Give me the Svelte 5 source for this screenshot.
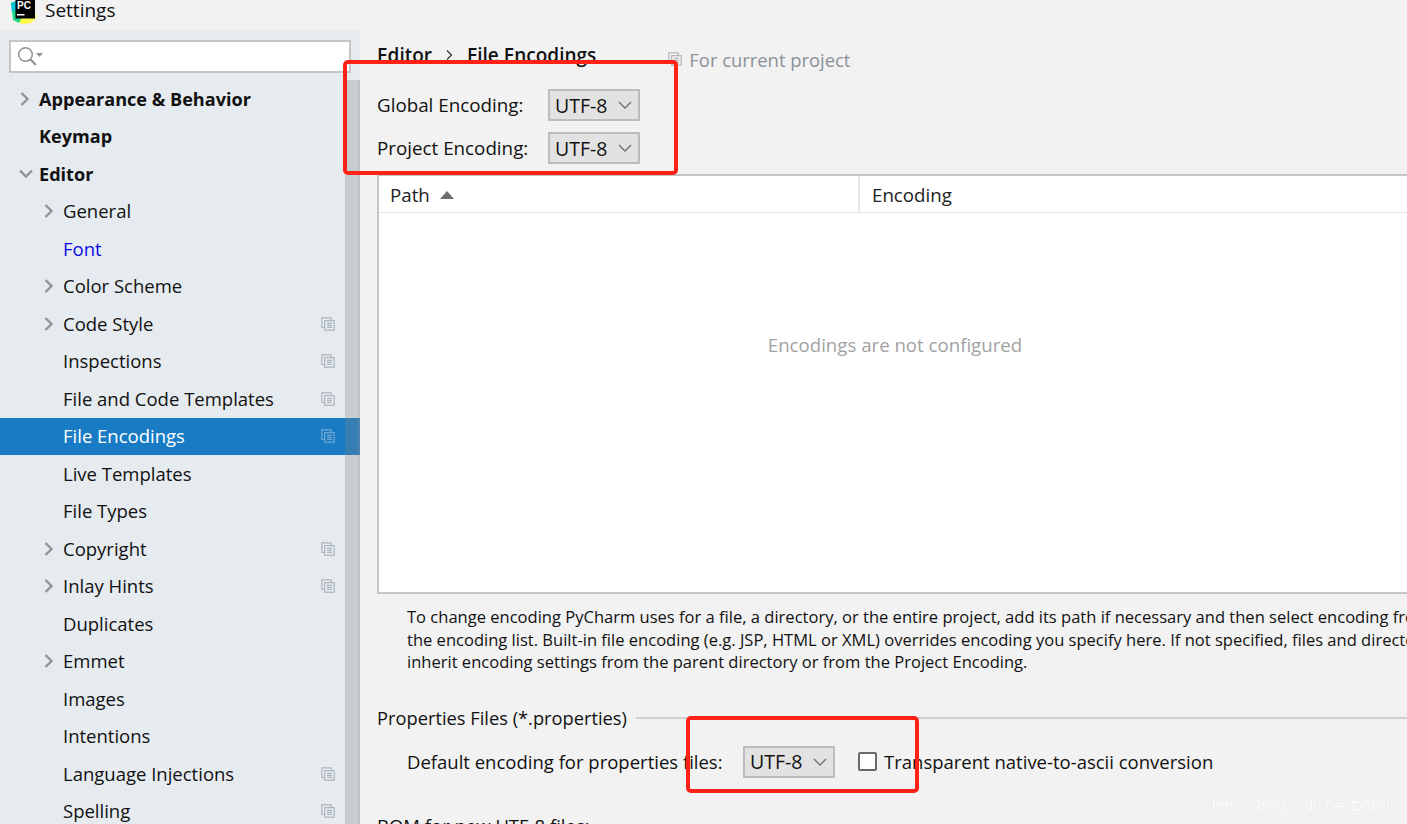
<script>
  const rows = [
    { label: 'Appearance & Behavior', bold: true, arrow: 'right', depth: 0 },
    { label: 'Keymap', bold: true, depth: 0 },
    { label: 'Editor', bold: true, arrow: 'down', depth: 0 },
    { label: 'General', arrow: 'right', depth: 1 },
    { label: 'Font', link: true, depth: 1 },
    { label: 'Color Scheme', arrow: 'right', depth: 1 },
    { label: 'Code Style', arrow: 'right', depth: 1, copy: true },
    { label: 'Inspections', depth: 1, copy: true },
    { label: 'File and Code Templates', depth: 1, copy: true },
    { label: 'File Encodings', depth: 1, copy: true, selected: true },
    { label: 'Live Templates', depth: 1 },
    { label: 'File Types', depth: 1 },
    { label: 'Copyright', arrow: 'right', depth: 1, copy: true },
    { label: 'Inlay Hints', arrow: 'right', depth: 1, copy: true },
    { label: 'Duplicates', depth: 1 },
    { label: 'Emmet', arrow: 'right', depth: 1 },
    { label: 'Images', depth: 1 },
    { label: 'Intentions', depth: 1 },
    { label: 'Language Injections', depth: 1, copy: true },
    { label: 'Spelling', depth: 1, copy: true }
  ];
</script>

{#snippet copyIcon()}
  <svg class="copy" width="14" height="14" viewBox="0 0 14 14" fill="none" stroke="currentColor" stroke-width="1.2">
    <path d="M3.5 10.5H.8V.8h9.4v2.6" />
    <rect x="3.6" y="3.6" width="9.6" height="9.6" />
    <path d="M6 6.4h5M6 8.4h5M6 10.4h5" />
  </svg>
{/snippet}

{#snippet combo(value)}
  <div class="combo">
    <span>{value}</span>
    <svg width="14" height="8" viewBox="0 0 14 8" fill="none" stroke="#6e6e6e" stroke-width="1.3">
      <path d="M1 1l6 6 6-6" />
    </svg>
  </div>
{/snippet}

<div class="window">
  <header class="titlebar">
    <svg class="logo" width="26" height="24" viewBox="0 0 26 24">
      <path d="M0 3L8 0h10v14L8 23 2 20z" fill="#21d789" />
      <path d="M0 3L8 0h6L6 10 1 12z" fill="#09c4d8" />
      <path d="M8 23l3-6 14-3 0 4-5 5-7 1z" fill="#fcf84a" />
      <rect x="4.500" y="0" width="19.500" height="18.500" fill="#000" />
      <text x="6" y="9" class="logo-text">PC</text>
      <rect x="6" y="14" width="7.500" height="1.500" fill="#fff" />
    </svg>
    <span class="title">Settings</span>
  </header>

  <div class="body">
    <aside class="sidebar">
      <div class="search">
        <svg width="28" height="22" viewBox="0 0 28 22" fill="none">
          <circle cx="8.500" cy="8.500" r="6.800" stroke="#8b9398" stroke-width="1.500" />
          <path d="M13.500 13.500l5.500 5.500" stroke="#8b9398" stroke-width="2" />
          <path d="M19 7h7l-3.500 4z" fill="#8b9398" />
        </svg>
      </div>
      <div class="tree-wrap">
        <div class="tree">
          {#each rows as row}
            <div class="row" class:selected={row.selected} class:nested={row.depth === 1}>
              <span class="arrow">
                {#if row.arrow === 'right'}
                  <svg width="10" height="14" viewBox="0 0 10 14" fill="none" stroke="#8f9499" stroke-width="2.400">
                    <path d="M1.500 1l6 6-6 6" />
                  </svg>
                {:else if row.arrow === 'down'}
                  <svg width="14" height="10" viewBox="0 0 14 10" fill="none" stroke="#8f9499" stroke-width="2.400">
                    <path d="M1 1.500l6 6 6-6" />
                  </svg>
                {/if}
              </span>
              <span class="label" class:bold={row.bold} class:link={row.link}>{row.label}</span>
              {#if row.copy}
                {@render copyIcon()}
              {/if}
            </div>
          {/each}
        </div>
        <div class="scrollbar"></div>
      </div>
    </aside>

    <main class="content">
      <div class="crumbs">
        <b>Editor</b>
        <svg width="7" height="12" viewBox="0 0 7 12" fill="none" stroke="#333" stroke-width="1.200">
          <path d="M1 1.500L5.500 6 1 10.500" />
        </svg>
        <b>File Encodings</b>
        <span class="scope">
          {@render copyIcon()}
          For current project
        </span>
      </div>

      <div class="enc-row">
        <label for="none">Global Encoding:</label>
        {@render combo('UTF-8')}
      </div>
      <div class="enc-row second">
        <label for="none">Project Encoding:</label>
        {@render combo('UTF-8')}
      </div>

      <section class="table">
        <div class="thead">
          <div class="th path">
            Path
            <svg width="14" height="8" viewBox="0 0 14 8"><path d="M0 8L7 0l7 8z" fill="#6e6e6e" /></svg>
          </div>
          <div class="th">Encoding</div>
        </div>
        <div class="empty">Encodings are not configured</div>
      </section>

      <p class="help">
        To change encoding PyCharm uses for a file, a directory, or the entire project, add its path if necessary and then select encoding from<br />
        the encoding list. Built-in file encoding (e.g. JSP, HTML or XML) overrides encoding you specify here. If not specified, files and directories<br />
        inherit encoding settings from the parent directory or from the Project Encoding.
      </p>

      <div class="group-title">
        <span>Properties Files (*.properties)</span>
        <i></i>
      </div>
      <div class="props">
        <span class="props-label">Default encoding for properties files:</span>
        {@render combo('UTF-8')}
        <span class="check"></span>
        <span>Transparent native-to-ascii conversion</span>
      </div>
      <div class="bom">BOM for new UTF-8 files:</div>
    </main>
  </div>

  <!-- annotations drawn over the screenshot -->
  <div class="mark mark-a"></div>
  <div class="mark mark-b"></div>
  <div class="watermark">https://blog.csdn.net/Oopsl</div>
</div>

<style>
  :global(body) {
    margin: 0;
    background: #f2f2f2;
  }
  .window {
    position: relative;
    width: 1407px;
    height: 824px;
    overflow: hidden;
    background: #f2f2f2;
    color: #111;
    font-family: "Open Sans", "Noto Sans", sans-serif;
    font-size: 18.500px;
    display: flex;
    flex-direction: column;
  }
  .titlebar {
    height: 30px;
    flex: none;
    display: flex;
    align-items: flex-start;
    padding-left: 11px;
    gap: 8px;
    background: #f2f2f2;
  }
  .logo {
    flex: none;
  }
  .logo-text {
    font-family: "Liberation Sans", sans-serif;
    font-size: 10px;
    font-weight: 700;
    fill: #fff;
  }
  .title {
    font-size: 19px;
    line-height: 20px;
  }
  .body {
    flex: 1;
    display: flex;
    min-height: 0;
  }
  .sidebar {
    width: 360px;
    flex: none;
    background: #e6ebf0;
    display: flex;
    flex-direction: column;
  }
  .search {
    margin: 10px 9px 8px 9px;
    height: 33px;
    box-sizing: border-box;
    background: #fff;
    border: 2px solid #c3c6c9;
    display: flex;
    align-items: center;
    padding-left: 6px;
  }
  .tree-wrap {
    position: relative;
    flex: 1;
    min-height: 0;
    margin-top: -1px;
  }
  .tree {
    overflow: hidden;
    height: 100%;
  }
  .scrollbar {
    position: absolute;
    top: 0;
    bottom: 0;
    right: 0;
    width: 15px;
    background: rgba(128, 132, 140, 0.3);
    border-right: 2px solid rgba(150, 155, 160, 0.2);
    box-sizing: border-box;
  }
  .row {
    height: 37.500px;
    display: flex;
    align-items: center;
    padding-left: 20px;
    padding-right: 25px;
    box-sizing: border-box;
    flex: none;
  }
  .row.nested {
    padding-left: 44px;
  }
  .arrow {
    width: 19px;
    flex: none;
    display: flex;
    align-items: center;
  }
  .row:nth-child(3) .arrow {
    margin-left: -1px;
    width: 20px;
  }
  .label {
    flex: 1;
    white-space: nowrap;
    padding-bottom: 1px;
  }
  .label.bold {
    font-weight: 700;
    font-size: 18.100px;
    padding-bottom: 0.500px;
  }
  .link {
    color: #0a0ae6;
  }
  .row .copy {
    color: #adb6bc;
    flex: none;
  }
  .row.selected {
    background: #187bc4;
    color: #fff;
  }
  .row.selected .copy {
    color: #70a8d2;
  }
  .content {
    flex: 1;
    min-width: 0;
    padding-left: 17px;
  }
  .crumbs {
    display: flex;
    align-items: center;
    height: 20px;
    margin-top: 15px;
    white-space: nowrap;
    gap: 14px;
  }
  .crumbs b {
    font-weight: 600;
    font-size: 19px;
  }
  .scope {
    display: inline-flex;
    align-items: center;
    gap: 7px;
    margin-left: 58px;
    padding-top: 8px;
    color: #8a9199;
    font-size: 18.400px;
  }
  .scope .copy {
    color: #b4babf;
  }
  .enc-row {
    display: flex;
    align-items: center;
    margin-top: 24px;
    height: 32px;
    white-space: nowrap;
    font-size: 18.800px;
  }
  .enc-row.second {
    margin-top: 11px;
  }
  .enc-row label {
    width: 171px;
  }
  .combo {
    width: 92px;
    height: 32px;
    box-sizing: border-box;
    background: #e2e2e2;
    border: 2px solid #bcbcbc;
    display: flex;
    align-items: center;
    justify-content: space-between;
    padding: 0 6px 0 5px;
    flex: none;
    font-size: 19.500px;
  }
  .table {
    margin-top: 10px;
    width: 1034px;
    height: 420px;
    box-sizing: border-box;
    background: #fff;
    border: 2px solid #c4c4c4;
    border-right: 0;
    display: flex;
    flex-direction: column;
  }
  .thead {
    height: 36px;
    flex: none;
    display: flex;
    border-bottom: 1px solid #e6e6e6;
  }
  .th {
    display: flex;
    align-items: center;
    padding-left: 12px;
    padding-top: 1px;
    gap: 10px;
    color: #222;
    font-size: 18.700px;
  }
  .th.path {
    width: 481px;
    box-sizing: border-box;
    padding-left: 11px;
    border-right: 2px solid #e6e6e6;
  }
  .empty {
    flex: 1;
    display: flex;
    align-items: center;
    justify-content: center;
    padding-bottom: 116px;
    color: #a2a2a2;
    font-size: 18.650px;
    white-space: nowrap;
  }
  .help {
    margin: 12px 0 0 30px;
    font-size: 16.550px;
    line-height: 22.500px;
    white-space: nowrap;
  }
  .group-title {
    display: flex;
    align-items: center;
    gap: 9px;
    margin-top: 31px;
    height: 26px;
    white-space: nowrap;
    font-size: 18.300px;
  }
  .group-title i {
    flex: 1;
    height: 2px;
    background: #cfcfcf;
  }
  .props {
    display: flex;
    align-items: center;
    margin: 15px 0 0 30px;
    height: 32px;
    white-space: nowrap;
  }
  .props-label {
    width: 336px;
  }
  .check {
    width: 19px;
    height: 19px;
    box-sizing: border-box;
    background: #fff;
    border: 2px solid #6a6a6a;
    border-radius: 2px;
    margin: 0 7px 0 23px;
  }
  .bom {
    margin-top: 35px;
    white-space: nowrap;
  }
  .mark {
    position: absolute;
    box-sizing: border-box;
    border: 4px solid #ff2116;
    border-radius: 5px;
  }
  .mark-a {
    left: 343px;
    top: 60px;
    width: 335px;
    height: 115px;
  }
  .mark-b {
    left: 686px;
    top: 716px;
    width: 233px;
    height: 77px;
  }
  .watermark {
    position: absolute;
    left: 1212px;
    top: 797px;
    font-family: "Liberation Sans", sans-serif;
    font-size: 15px;
    color: #fff;
    text-shadow: 0 0 1px #d8d8d8;
  }
</style>
